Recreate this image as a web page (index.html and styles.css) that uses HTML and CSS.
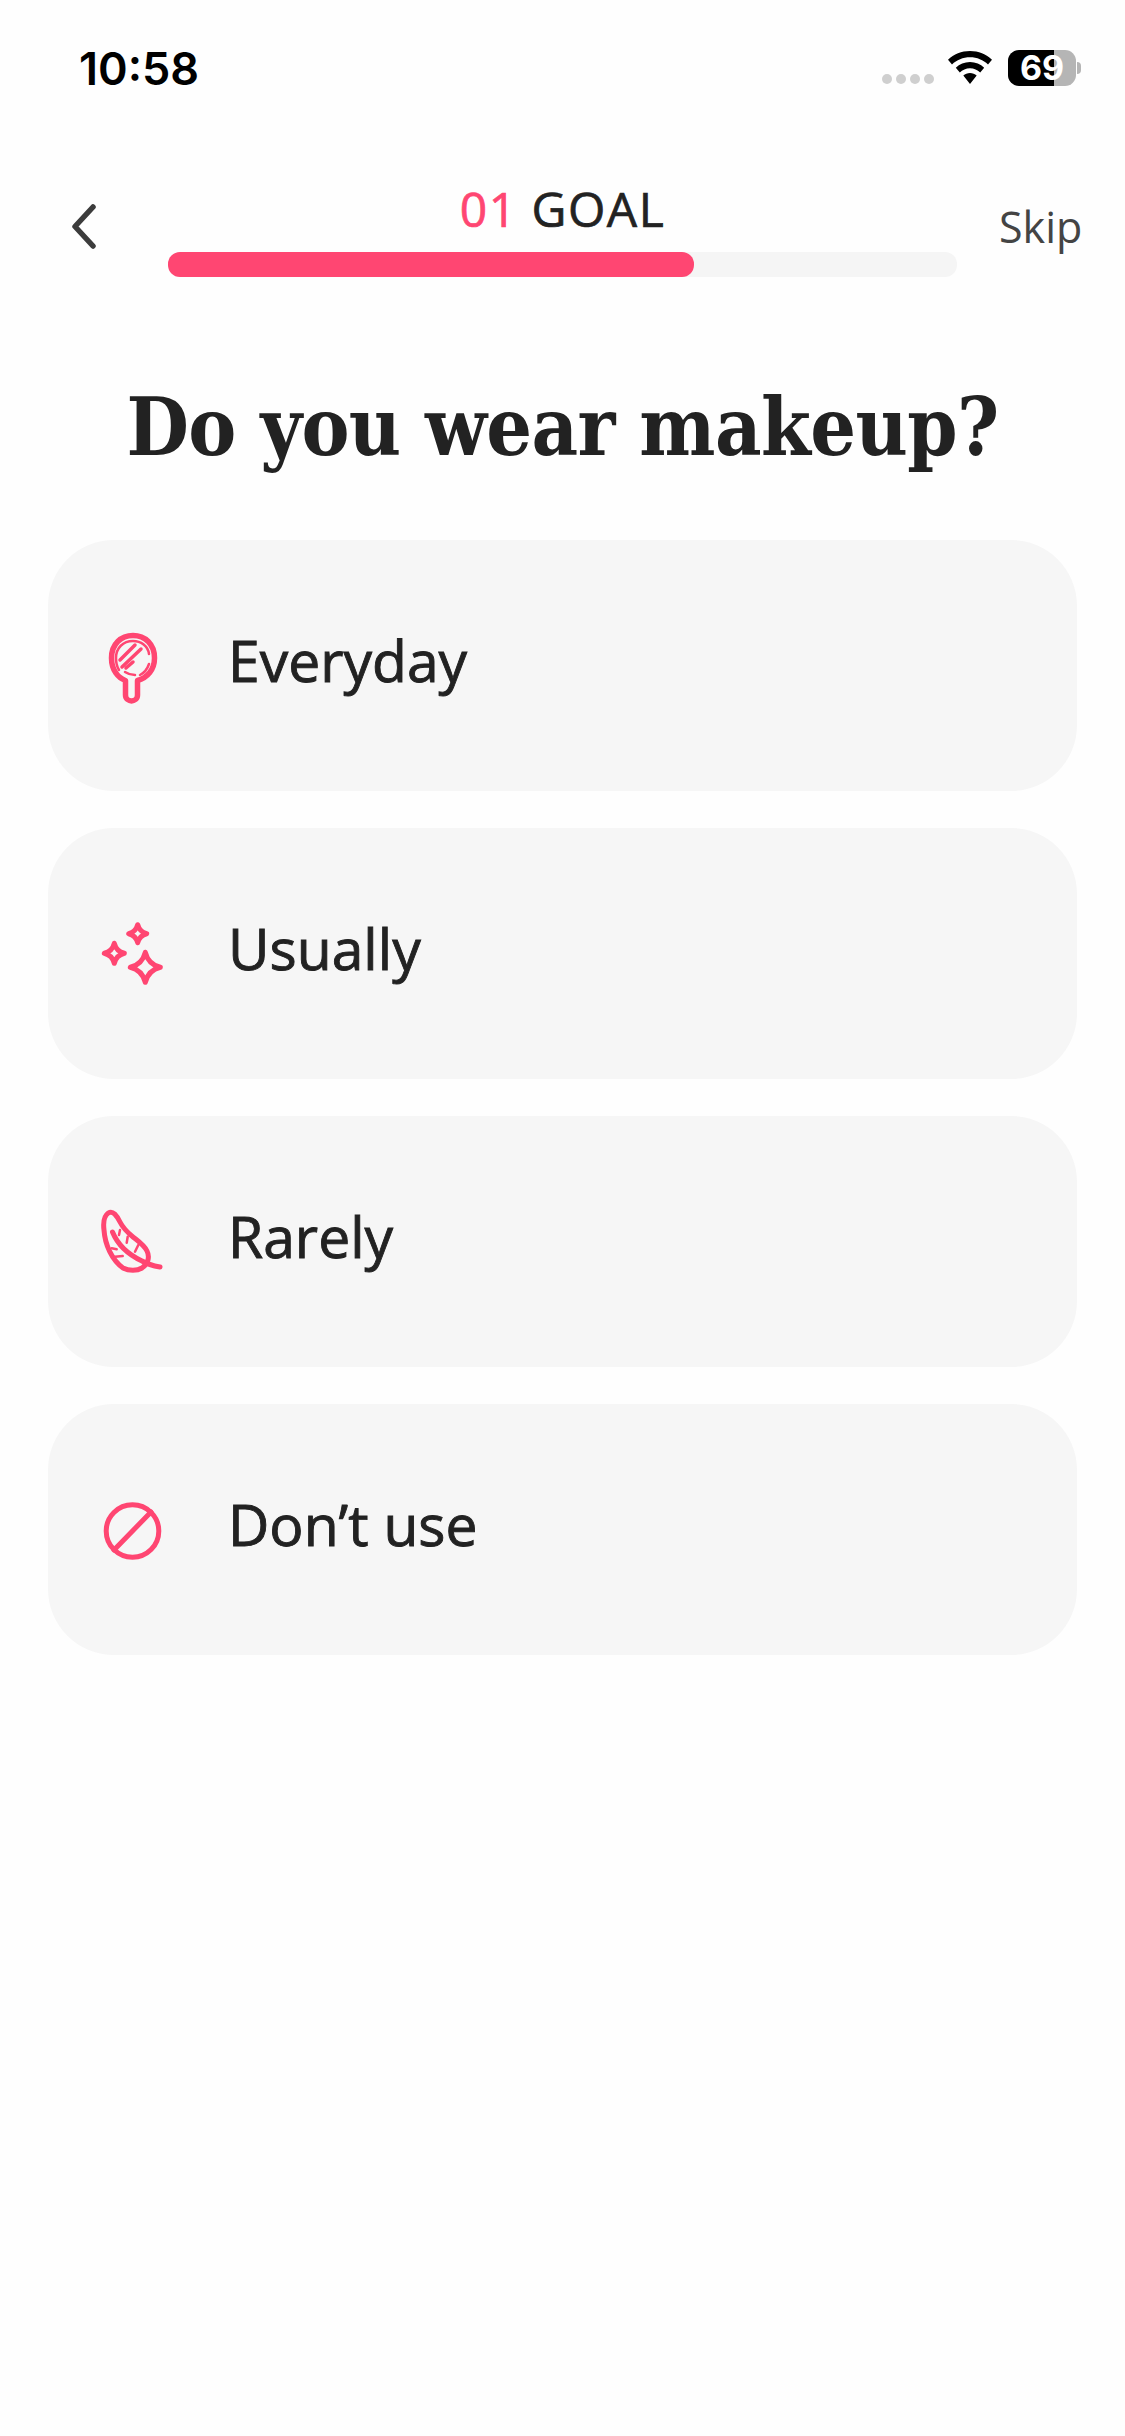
FILE: index.html
```html
<!DOCTYPE html>
<html lang="en">
<head>
<meta charset="utf-8">
<title>Goal</title>
<link rel="stylesheet" href="styles.css">
</head>
<body>
<div class="screen">
  <div class="status">
    <span class="time">10:58</span>
    <div class="status-right">
      <div class="dots"><i></i><i></i><i></i><i></i></div>
      <svg class="wifi" width="46" height="34" viewBox="0 0 46 34"><path d="M23 0C14.500 0 6.800 3.300 1 8.700L5 13.500C9.700 9 16 6.300 23 6.300S36.300 9 41 13.500L45 8.700C39.200 3.300 31.500 0 23 0ZM23 11C17.500 11 12.500 13.200 8.800 16.700L12.800 21.500C15.500 19 19 17.300 23 17.300S30.500 19 33.200 21.500L37.200 16.700C33.500 13.200 28.500 11 23 11ZM23 22C20.500 22 18.100 23 16.300 24.600L23 33L29.700 24.600C27.900 23 25.500 22 23 22Z"/></svg>
      <div class="battery"><span class="fill"></span><span class="level">69</span></div>
      <span class="nub"></span>
    </div>
  </div>
  <header class="nav">
    <svg class="back" width="30" height="46" viewBox="0 0 30 46"><path d="M25 4L7 23.500L25 43" fill="none" stroke="#3c3c3c" stroke-width="5.500" stroke-linecap="round" stroke-linejoin="round"/></svg>
    <div class="progress-wrap">
      <div class="step"><span class="num">01</span> GOAL</div>
      <div class="track"><div class="bar"></div></div>
    </div>
    <span class="skip">Skip</span>
  </header>
  <h1 class="title">Do you wear makeup?</h1>
  <div class="options">
    <div class="option">
      <svg class="icon" width="60" height="80" viewBox="0 -3 60 80" fill="none" stroke="#ff4672" stroke-width="5.500" stroke-linecap="round" stroke-linejoin="round"><path d="M31 6.500C19 6.500 9.500 15 9.500 29C9.500 41 16 49 23.500 51.500V66C23.500 70 27 72 29.500 72S35.500 70 35.500 66V51.500C45 49 52.500 41 52.500 29C52.500 15 43 6.500 31 6.500Z"/><path d="M17 41C14.500 37 14 33 14 29C14 19 21 12 31 12C39 12 46 17 47 25M47 35C45 41 42 44 38 46M23 43C26 45 29 46 33 46" stroke-width="2.500"/><path d="M18 31L33 16M20 38L39 20M24 39L31 33" stroke-width="3.500"/></svg>
      <span class="label">Everyday</span>
    </div>
    <div class="option">
      <svg class="icon" width="60" height="64" viewBox="0 0 60 64" fill="none" stroke="#ff4672" stroke-width="5" stroke-linejoin="round"><path d="M35.700 2.700Q37.500 9.900 44.700 11.700Q37.500 13.500 35.700 20.700Q33.900 13.500 26.700 11.700Q33.900 9.900 35.700 2.700Z"/><path d="M12.300 21.300Q14.300 29.300 22.300 31.300Q14.300 33.300 12.300 41.300Q10.300 33.300 2.300 31.300Q10.300 29.300 12.300 21.300Z"/><path d="M43.300 30.300Q46.300 42.300 58.300 45.300Q46.300 48.300 43.300 60.300Q40.300 48.300 28.300 45.300Q40.300 42.300 43.300 30.300Z"/></svg>
      <span class="label">Usually</span>
    </div>
    <div class="option">
      <svg class="icon" width="60" height="64" viewBox="0 0 60 64" fill="none" stroke="#ff4672" stroke-width="5" stroke-linecap="round" stroke-linejoin="round"><path d="M6.300 3C2 6 1 12 2 20C3 35 10 50 21 58C27 61 35 61 40 58C46 54 48 47 45 41C42 35 36 31 31 27C25 22 21 18 18 12C15 6 11 0 6.300 3Z"/><path d="M10.500 22C15 33 25 44 40 51C45 54 52 56 58 57"/><path d="M18 20L17 25M25.700 26.700L24.700 32.700M36.300 35L33 41.700M9.700 38.300L14.700 39.300M13 46.700L20.700 46" stroke-width="2.500"/></svg>
      <span class="label">Rarely</span>
    </div>
    <div class="option">
      <svg class="icon" width="60" height="60" viewBox="-0.500 -1 60 60" fill="none" stroke="#ff4672" stroke-width="5" stroke-linecap="round"><circle cx="30" cy="30" r="26.300"/><path d="M11.500 49L48.500 11"/></svg>
      <span class="label">Don’t use</span>
    </div>
  </div>
</div>
</body>
</html>
```
FILE: styles.css
```css
* { box-sizing: border-box; }
html, body { margin: 0; padding: 0; background: #fefefe; }
.screen { width: 1125px; height: 2436px; overflow: hidden; font-family: "Open Sans", sans-serif; color: #222; }
.status { display: flex; justify-content: space-between; align-items: center; height: 52px; margin-top: 42px; padding: 0 44px 0 79px; }
.time { font-family: Inter, sans-serif; font-size: 45px; font-weight: 600; color: #000; }
.status-right { display: flex; align-items: center; }
.dots { display: flex; gap: 4px; margin: 22px 13px 0 0; }
.dots i { width: 10px; height: 10px; border-radius: 50%; background: #cfcfcf; }
.wifi { margin-right: 15px; }
.battery { position: relative; width: 68px; height: 36px; border-radius: 11px; background: #b5b5b5; }
.fill { position: absolute; left: 0; top: 0; bottom: 0; width: 46px; border-radius: 11px 0 0 11px; background: #000; }
.level { position: absolute; left: 0; right: 0; top: 0; text-align: center; font: 700 34px/36px Inter, sans-serif; color: #fff; }
.nub { width: 4px; height: 12px; margin-left: 1px; border-radius: 0 4px 4px 0; background: #b5b5b5; }
.nav { display: flex; align-items: flex-start; margin-top: 92px; padding-left: 68px; position: relative; height: 90px; }
.back { margin-top: 17px; flex: none; }
.progress-wrap { width: 789px; margin-left: 70px; flex: none; }
.step { text-align: center; font-size: 48px; line-height: 46px; letter-spacing: 1.500px; font-weight: 400; -webkit-text-stroke: 0.700px currentColor; color: #222; }
.num { color: #ff4672; }
.track { height: 25px; margin-top: 20px; border-radius: 12px; background: #f5f5f5; }
.bar { width: 526px; height: 25px; border-radius: 12px; background: #ff4672; }
.skip { margin: 16px 0 0 42px; font-size: 43px; line-height: 50px; color: #444; }
.title { margin: 96px 0 0; text-align: center; font-family: "DejaVu Serif", serif; font-stretch: condensed; font-size: 80px; letter-spacing: -0.600px; line-height: 110px; font-weight: 700; color: #222; }
.options { display: flex; flex-direction: column; gap: 37px; margin: 58px 48px 0; }
.option { display: flex; align-items: center; height: 251px; border-radius: 66px; background: #f6f6f6; padding-left: 54px; }
.icon { flex: none; overflow: visible; }
.label { margin-left: 66px; padding-bottom: 12px; font-size: 57px; font-weight: 400; -webkit-text-stroke: 0.900px currentColor; color: #222; }
```
